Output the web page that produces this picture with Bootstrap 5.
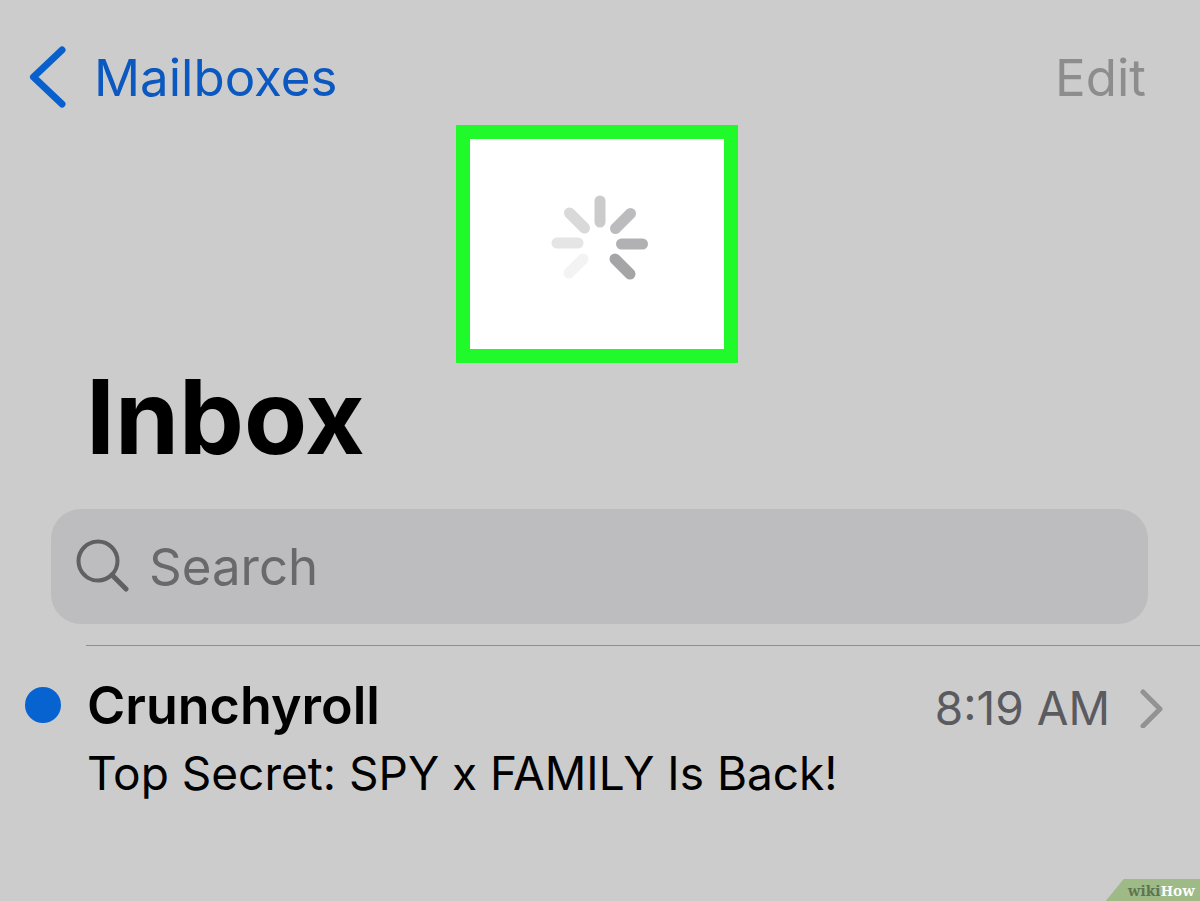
<!DOCTYPE html>
<html lang="en">
<head>
<meta charset="utf-8">
<meta name="viewport" content="width=device-width, initial-scale=1">
<title>Inbox</title>
<link href="https://cdn.jsdelivr.net/npm/bootstrap@5.3.0/dist/css/bootstrap.min.css" rel="stylesheet">
<style>
  body { background: #ccc; color: #000; font-family: Inter, "Liberation Sans", sans-serif; }
  .text-bar { font-size: 51px; line-height: 64px; }
  .top-bar { padding: 46px 54px 15px 28px; }
  .back-link { color: #0a58c0; gap: 28px; }
  .edit-btn { color: #8d8d8d; }
  .spin-row { padding-right: 6px; }
  .spin-box { width: 282px; height: 238px; border: 14px solid #20fa2b; background: #fff; padding-left: 6px; }
  .inbox-title { font-size: 103px; line-height: 108px; padding-left: 86px; }
  .search-wrap { margin: 38px 52px 0 51px; height: 115px; border-radius: 30px; background: #bdbdc0; padding: 0 24px; gap: 20px; }
  .search-input { color: #5f5f64; }
  .search-input::placeholder { color: #69696d; opacity: 1; }
  .mail-list { margin-top: 21px; }
  .mail-item { color: #000; }
  .mail-dot { width: 86px; padding-left: 25px; height: 64px; margin-top: 28px; }
  .mail-body { border-top: 1px solid #8e8e8e; padding: 28px 36px 0 1px; }
  .mail-head { line-height: 64px; }
  .mail-sender { font-size: 52px; }
  .mail-time { font-size: 46px; color: #5b5b5f; gap: 30px; padding-top: 2px; }
  .mail-subject { font-size: 46px; line-height: 56px; margin-top: 5px; }
  .brand-tag { background: #9dba87; clip-path: polygon(18px 0, 100% 0, 100% 100%, 0 100%); padding: 0 5px 0 22px; height: 22px; font: bold 15px/22px "Noto Serif", "DejaVu Serif", serif; color: #5f7350; }
  .brand-tag span { color: #fff; }
</style>
</head>
<body class="min-vh-100 d-flex flex-column overflow-x-hidden">
  <header class="top-bar text-bar d-flex justify-content-between align-items-center">
    <a href="#" class="back-link d-flex align-items-center text-decoration-none">
      <svg width="38" height="64" viewBox="0 0 38 64" fill="none" stroke="#0760cc" stroke-width="7" stroke-linecap="round" stroke-linejoin="round" aria-hidden="true"><path d="M34 4 5.500 31 34 58"/></svg>
      <span>Mailboxes</span>
    </a>
    <button type="button" class="edit-btn btn p-0 border-0 text-bar">Edit</button>
  </header>

  <main class="flex-grow-1">
    <div class="spin-row d-flex justify-content-center">
      <div class="spin-box d-flex align-items-center justify-content-center" role="status" aria-label="Loading">
        <svg width="100" height="100" viewBox="-50 -50 100 100" stroke-width="11" stroke-linecap="round" aria-hidden="true">
          <path stroke="#cbcbcc" d="M0-43V-22"/>
          <path stroke="#bcbcbe" d="M30.500-30.500 15.500-15.500"/>
          <path stroke="#b1b1b4" d="M21.500 0H42.500"/>
          <path stroke="#a5a5a7" d="M15 15 30 30"/>
          <path stroke="#f3f3f3" d="M-17 15-31 29"/>
          <path stroke="#e5e5e6" d="M-22-1H-43"/>
          <path stroke="#d9d9da" d="M-15.500-16-30.500-31"/>
        </svg>
      </div>
    </div>

    <h1 class="inbox-title fw-bold mb-0">Inbox</h1>

    <label class="search-wrap d-flex align-items-center">
      <svg class="flex-shrink-0" width="54" height="56" viewBox="0 0 54 56" fill="none" stroke="#5f5f64" stroke-linecap="round" aria-hidden="true"><circle cx="23" cy="22" r="19.500" stroke-width="4"/><path stroke-width="5" d="M37 36 51 50"/></svg>
      <input type="search" class="search-input text-bar form-control bg-transparent border-0 shadow-none p-0" placeholder="Search" aria-label="Search">
    </label>

    <div class="mail-list">
      <a href="#" class="mail-item d-flex text-decoration-none">
        <div class="mail-dot flex-shrink-0 d-flex align-items-center">
          <svg width="36" height="36" viewBox="0 0 36 36" role="img" aria-label="Unread"><circle cx="18" cy="18" r="18" fill="#0663d0"/></svg>
        </div>
        <div class="mail-body flex-grow-1">
          <div class="mail-head d-flex justify-content-between">
            <span class="mail-sender fw-semibold">Crunchyroll</span>
            <span class="mail-time d-flex align-items-center">8:19 AM
              <svg width="24" height="40" viewBox="0 0 24 40" fill="none" stroke="#929292" stroke-width="5" stroke-linecap="round" stroke-linejoin="round" aria-hidden="true"><path d="M3 4 20 21 3 38"/></svg>
            </span>
          </div>
          <div class="mail-subject">Top Secret: SPY x FAMILY Is Back!</div>
        </div>
      </a>
    </div>
  </main>

  <footer class="d-flex justify-content-end">
    <div class="brand-tag">wiki<span>How</span></div>
  </footer>
<script src="https://cdn.jsdelivr.net/npm/bootstrap@5.3.0/dist/js/bootstrap.bundle.min.js"></script>
</body>
</html>
